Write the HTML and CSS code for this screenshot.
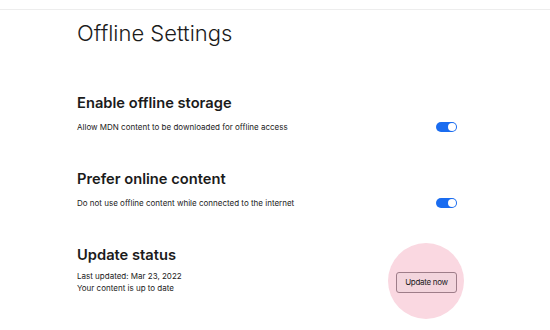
FILE: index.html
```html
<!DOCTYPE html>
<html lang="en">
<head>
  <meta charset="UTF-8">
  <meta name="viewport" content="width=device-width, initial-scale=1.0">
  <title>Offline Settings</title>
  <link rel="stylesheet" href="styles.css">
</head>
<body>
  <div class="topbar"></div>
  <div class="container">
    <h1>Offline Settings</h1>

    <div class="setting">
      <h2>Enable offline storage</h2>
      <div class="row">
        <p>Allow MDN content to be downloaded for offline access</p>
        <span class="toggle on"></span>
      </div>
    </div>

    <div class="setting">
      <h2>Prefer online content</h2>
      <div class="row">
        <p>Do not use offline content while connected to the internet</p>
        <span class="toggle on"></span>
      </div>
    </div>

    <div class="setting last">
      <h2>Update status</h2>
      <div class="row">
        <p>Last updated: Mar 23, 2022<br>Your content is up to date</p>
        <div class="highlight">
          <button>Update now</button>
        </div>
      </div>
    </div>
  </div>
</body>
</html>
```

FILE: styles.css
```css
body {
  font-family: Inter, "Noto Sans", sans-serif;
  margin: 0;
  min-height: 100vh;
  background-color: #fff;
  color: #1b1b1b;
}

.topbar {
  height: 9px;
  border-bottom: 1px solid #ededed;
}

.container {
  width: 380px;
  padding-left: 77px;
  padding-bottom: 36px;
}

h1 {
  font-size: 22px;
  font-weight: 300;
  margin: 10px 0 0;
  line-height: 26px;
}

.setting {
  margin-top: 48px;
}

.setting + .setting {
  margin-top: 37px;
}

.setting h2 {
  font-size: 14.7px;
  font-weight: 600;
  margin: 0;
  line-height: 18px;
}

.row {
  display: flex;
  justify-content: space-between;
  align-items: center;
  margin-top: 9px;
}

.row p {
  margin: 0;
  font-size: 8px;
  line-height: 12px;
}

.toggle {
  position: relative;
  width: 21px;
  height: 10px;
  border-radius: 5px;
  background-color: #1a6cf0;
}

.toggle.on::after {
  content: "";
  position: absolute;
  top: 1px;
  right: 1px;
  width: 8px;
  height: 8px;
  border-radius: 50%;
  background-color: #fff;
}

.last .row {
  margin-top: 6px;
}

.highlight {
  position: relative;
  z-index: 0;
}

/* click highlight circle behind the button */
.highlight::before {
  content: "";
  position: absolute;
  z-index: -1;
  left: 50%;
  top: 50%;
  width: 76px;
  height: 76px;
  margin: -39px 0 0 -39px;
  border-radius: 50%;
  background-color: #fad8e1;
}

.highlight button {
  display: block;
  font-family: Inter, "Noto Sans", sans-serif;
  font-size: 8px;
  letter-spacing: -0.3px;
  color: #1b1b1b;
  width: 61px;
  height: 21px;
  padding: 0;
  background-color: #f3d5dd;
  border: 1px solid #9e7d89;
  border-radius: 3px;
}
```
